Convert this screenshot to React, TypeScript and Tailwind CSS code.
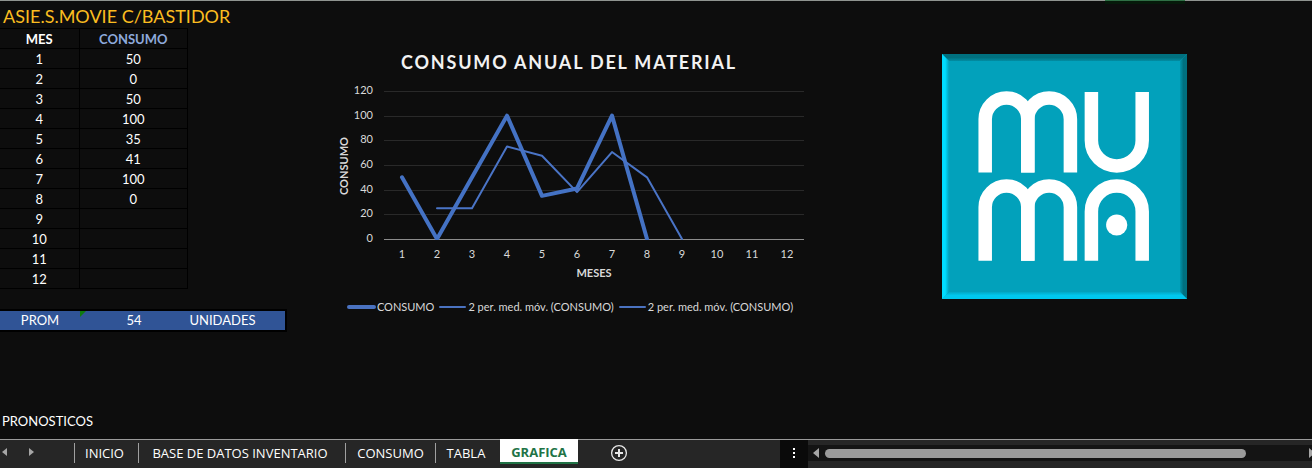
import React from "react";

const consumption: (number | null)[] = [50, 0, 50, 100, 35, 41, 100, 0, null, null, null, null];
const months = consumption.map((_, i) => i + 1);
const averages: [number, number][] = [
  [2, 25],
  [3, 25],
  [4, 75],
  [5, 67.5],
  [6, 38],
  [7, 70.5],
  [8, 50],
  [9, 0],
];
const ticks = [0, 20, 40, 60, 80, 100, 120];

const px = (month: number) => 68 + (month - 1) * 35;
const py = (value: number) => 159 - (value * 148) / 120;

function DataTable() {
  return (
    <table className="w-[188px] table-fixed border-collapse text-center text-[13px] leading-4 text-white">
      <thead>
        <tr className="h-5">
          <th className="w-[79px] border-y border-r border-black p-0 font-bold">MES</th>
          <th className="border border-black p-0 font-bold text-[#8ea9db]">CONSUMO</th>
        </tr>
      </thead>
      <tbody>
        {consumption.map((value, i) => (
          <tr key={i} className="h-5">
            <td className="border-y border-r border-black p-0">{i + 1}</td>
            <td className="border border-black p-0">{value}</td>
          </tr>
        ))}
      </tbody>
    </table>
  );
}

function AverageRow() {
  return (
    <div className="mt-5 flex w-[287px] border-y-2 border-r-2 border-black bg-[#305496] text-center text-[13px] leading-[19px] text-white">
      <span className="w-20">PROM</span>
      <span className="relative w-27">
        54
        <svg className="absolute top-0 left-0" width="6" height="6" viewBox="0 0 6 6" aria-hidden="true">
          <path d="M0 0H6L0 6Z" fill="#0f7a0f" />
        </svg>
      </span>
      <span className="w-[69px]">UNIDADES</span>
    </div>
  );
}

function LegendItem({ label, thick }: { label: string; thick?: boolean }) {
  return (
    <li className="flex items-center gap-px">
      <svg width="29" height="6" viewBox="0 0 29 6" aria-hidden="true">
        <line
          x1="2"
          x2="27"
          y1="3"
          y2="3"
          stroke="#4a72c0"
          strokeWidth={thick ? 4 : 2}
          strokeLinecap="round"
        />
      </svg>
      {label}
    </li>
  );
}

function Chart() {
  const main = consumption
    .map((v, i) => (v === null ? null : `${px(i + 1)},${py(v)}`))
    .filter(Boolean)
    .join(" ");
  const trend = averages.map(([m, v]) => `${px(m)},${py(v)}`).join(" ");
  return (
    <figure className="w-[470px] shrink-0 pt-[42px] text-[#d9d9d9]">
      <figcaption className="text-center text-lg leading-8 font-bold tracking-widest text-[#f2f2f2]">
        CONSUMO ANUAL DEL MATERIAL
      </figcaption>
      <svg
        className="block text-[11px]"
        width="470"
        height="204"
        viewBox="0 -2 470 204"
        fill="currentColor"
        role="img"
        aria-label="CONSUMO ANUAL DEL MATERIAL"
      >
        {ticks.map((t) => (
          <g key={t}>
            <line
              x1="50"
              x2="470"
              y1={Math.round(py(t)) + 0.5}
              y2={Math.round(py(t)) + 0.5}
              stroke={t === 0 ? "#8c8c8c" : "#292929"}
            />
            <text x="39" y={Math.round(py(t)) + 3} textAnchor="end">
              {t}
            </text>
          </g>
        ))}
        {months.map((m) => (
          <text key={m} x={px(m)} y="178" textAnchor="middle">
            {m}
          </text>
        ))}
        <text x="260" y="197" textAnchor="middle" fontWeight="700">
          MESES
        </text>
        <text transform="translate(14 86) rotate(-90)" textAnchor="middle" fontWeight="700">
          CONSUMO
        </text>
        <svg x="0" y="-2" width="470" height="162" viewBox="0 -2 470 162">
          <polyline
            points={main}
            fill="none"
            stroke="#4472c4"
            strokeWidth="4"
            strokeLinecap="round"
            strokeLinejoin="round"
          />
          <polyline
            points={trend}
            fill="none"
            stroke="#4a74c6"
            strokeWidth="2"
            strokeLinecap="round"
            strokeLinejoin="round"
          />
        </svg>
      </svg>
      <ul className="mt-4 flex justify-center gap-1 pl-0.5 text-[11px] leading-[18px] whitespace-nowrap">
        <LegendItem label="CONSUMO" thick />
        <LegendItem label="2 per. med. móv. (CONSUMO)" />
        <LegendItem label="2 per. med. móv. (CONSUMO)" />
      </ul>
    </figure>
  );
}

function Logo() {
  return (
    <svg className="mt-[50px] shrink-0" width="245" height="245" viewBox="0 0 245 245" role="img" aria-label="MUMA">
      <defs>
        <linearGradient id="bevelLeft" x1="0" x2="1" y1="0" y2="0">
          <stop offset="0.45" stopColor="#00dcff" />
          <stop offset="1" stopColor="#02a1bb" />
        </linearGradient>
        <linearGradient id="bevelTop" x1="0" x2="0" y1="0" y2="1">
          <stop offset="0.5" stopColor="#00707f" />
          <stop offset="1" stopColor="#028da3" />
        </linearGradient>
        <linearGradient id="bevelRight" x1="1" x2="0" y1="0" y2="0">
          <stop offset="0.5" stopColor="#007080" />
          <stop offset="1" stopColor="#0294ac" />
        </linearGradient>
        <linearGradient id="bevelBottom" x1="0" x2="0" y1="1" y2="0">
          <stop offset="0.5" stopColor="#00c8ee" />
          <stop offset="1" stopColor="#02a8c5" />
        </linearGradient>
      </defs>
      <rect width="245" height="245" fill="#02a1bb" />
      <path d="M0 0H245L238 7H7Z" fill="url(#bevelTop)" />
      <path d="M245 0V245L238 238V7Z" fill="url(#bevelRight)" />
      <path d="M0 245H245L238 238H7Z" fill="url(#bevelBottom)" />
      <path d="M0 0L7 7V238L0 245Z" fill="url(#bevelLeft)" />
      <g fill="none" stroke="#fff" strokeWidth="13.5">
        <path d="M43.2 118.5V65.3A21.3 21.3 0 0 1 85.8 65.3V118.5" />
        <path d="M85.8 118.5V65.3A21.3 21.3 0 0 1 128.4 65.3V118.5" />
        <path d="M149.4 38V86.5A25.4 25.4 0 0 0 200.2 86.5V38" />
        <path d="M43.2 206.7V153.3A21.3 21.3 0 0 1 85.8 153.3V206.7" />
        <path d="M85.8 206.7V153.3A21.3 21.3 0 0 1 128.4 153.3V206.7" />
        <path d="M149.4 206.7V157.4A25.4 25.4 0 0 1 200.2 157.4V206.7" />
      </g>
      <circle cx="174.7" cy="171" r="10.6" fill="#fff" />
    </svg>
  );
}

function Arrow({ label, dir, size }: { label: string; dir: "left" | "right"; size: number }) {
  return (
    <button type="button" aria-label={label} className="shrink-0">
      <svg width={size / 2 + 1} height={size} viewBox="0 0 5 8" fill="#a6a6a6" preserveAspectRatio="none">
        <path d={dir === "left" ? "M5 0V8L0 4Z" : "M0 0V8L5 4Z"} />
      </svg>
    </button>
  );
}

const tabClass = "h-5 border-l border-[#a0a0a0] text-center text-white";

function SheetBar() {
  return (
    <footer className="flex h-[29px] border-t border-[#9a9a9a] bg-[#262626] text-[13px] leading-5">
      <nav aria-label="Hojas" className="flex w-[780px] shrink-0">
        <div className="flex w-[74px] items-center gap-[22px] pb-1 pl-0.5">
          <Arrow label="Hoja anterior" dir="left" size={8} />
          <Arrow label="Hoja siguiente" dir="right" size={8} />
        </div>
        <div className="flex pt-[3px] font-['Open_Sans',sans-serif]">
          <button type="button" className={`${tabClass} w-16 pr-1`}>INICIO</button>
          <button type="button" className={`${tabClass} w-[207px] pr-1`}>BASE DE DATOS INVENTARIO</button>
          <button type="button" className={`${tabClass} w-[90px]`}>CONSUMO</button>
          <button type="button" className={`${tabClass} w-[65px] pr-1`}>TABLA</button>
        </div>
        <button
          type="button"
          aria-current="page"
          className="-mt-px h-[25px] w-[78px] border-b-2 border-[#217346] bg-white pt-0.5 text-center font-['Open_Sans',sans-serif] font-bold text-[#217346]"
        >
          GRAFICA
        </button>
        <button type="button" aria-label="Hoja nueva" className="mt-1 ml-8 size-[18px]">
          <svg width="18" height="18" viewBox="0 0 18 18" fill="none" stroke="#e8e8e8">
            <circle cx="9" cy="9" r="7.4" strokeWidth="1.3" />
            <path d="M9 5V13M5 9H13" strokeWidth="2" />
          </svg>
        </button>
      </nav>
      <div className="flex w-7 shrink-0 items-center justify-center bg-[#0a0a0a] pb-0.5">
        <svg width="2" height="10" viewBox="0 0 2 10" fill="#fff" aria-hidden="true">
          <path d="M0 0H2V2H0ZM0 4H2V6H0ZM0 8H2V10H0Z" />
        </svg>
      </div>
      <div className="mt-[5px] flex h-4 min-w-0 flex-1 items-center overflow-hidden bg-[#141414] pl-[5px]">
        <Arrow label="Desplazar a la izquierda" dir="left" size={10} />
        <div className="mx-1.5 flex min-w-0 flex-1">
          <div className="h-[9px] w-[88%] rounded-full bg-[#9b9b9b]" />
        </div>
        <div className="w-[3px] overflow-hidden">
          <Arrow label="Desplazar a la derecha" dir="right" size={10} />
        </div>
      </div>
    </footer>
  );
}

export default function App() {
  return (
    <div className="flex min-h-screen flex-col bg-[#0d0d0d] font-[Lato,sans-serif]">
      <div className="flex h-1 justify-end border-t border-[#8f9490] pr-[127px]">
        <div className="-mt-px w-20 border-t border-[#2f6f45] bg-[#051a0a]" />
      </div>
      <main className="flex flex-1 items-start">
        <section className="flex w-[334px] shrink-0 flex-col">
          <h1 className="pl-[3px] text-lg leading-6 text-[#fbbd20]">ASIE.S.MOVIE C/BASTIDOR</h1>
          <DataTable />
          <AverageRow />
          <p className="mt-20 pl-0.5 text-[13px] leading-[18px] text-white">PRONOSTICOS</p>
        </section>
        <Chart />
        <div className="flex min-w-0 flex-1 justify-center pl-3">
          <Logo />
        </div>
      </main>
      <SheetBar />
    </div>
  );
}
